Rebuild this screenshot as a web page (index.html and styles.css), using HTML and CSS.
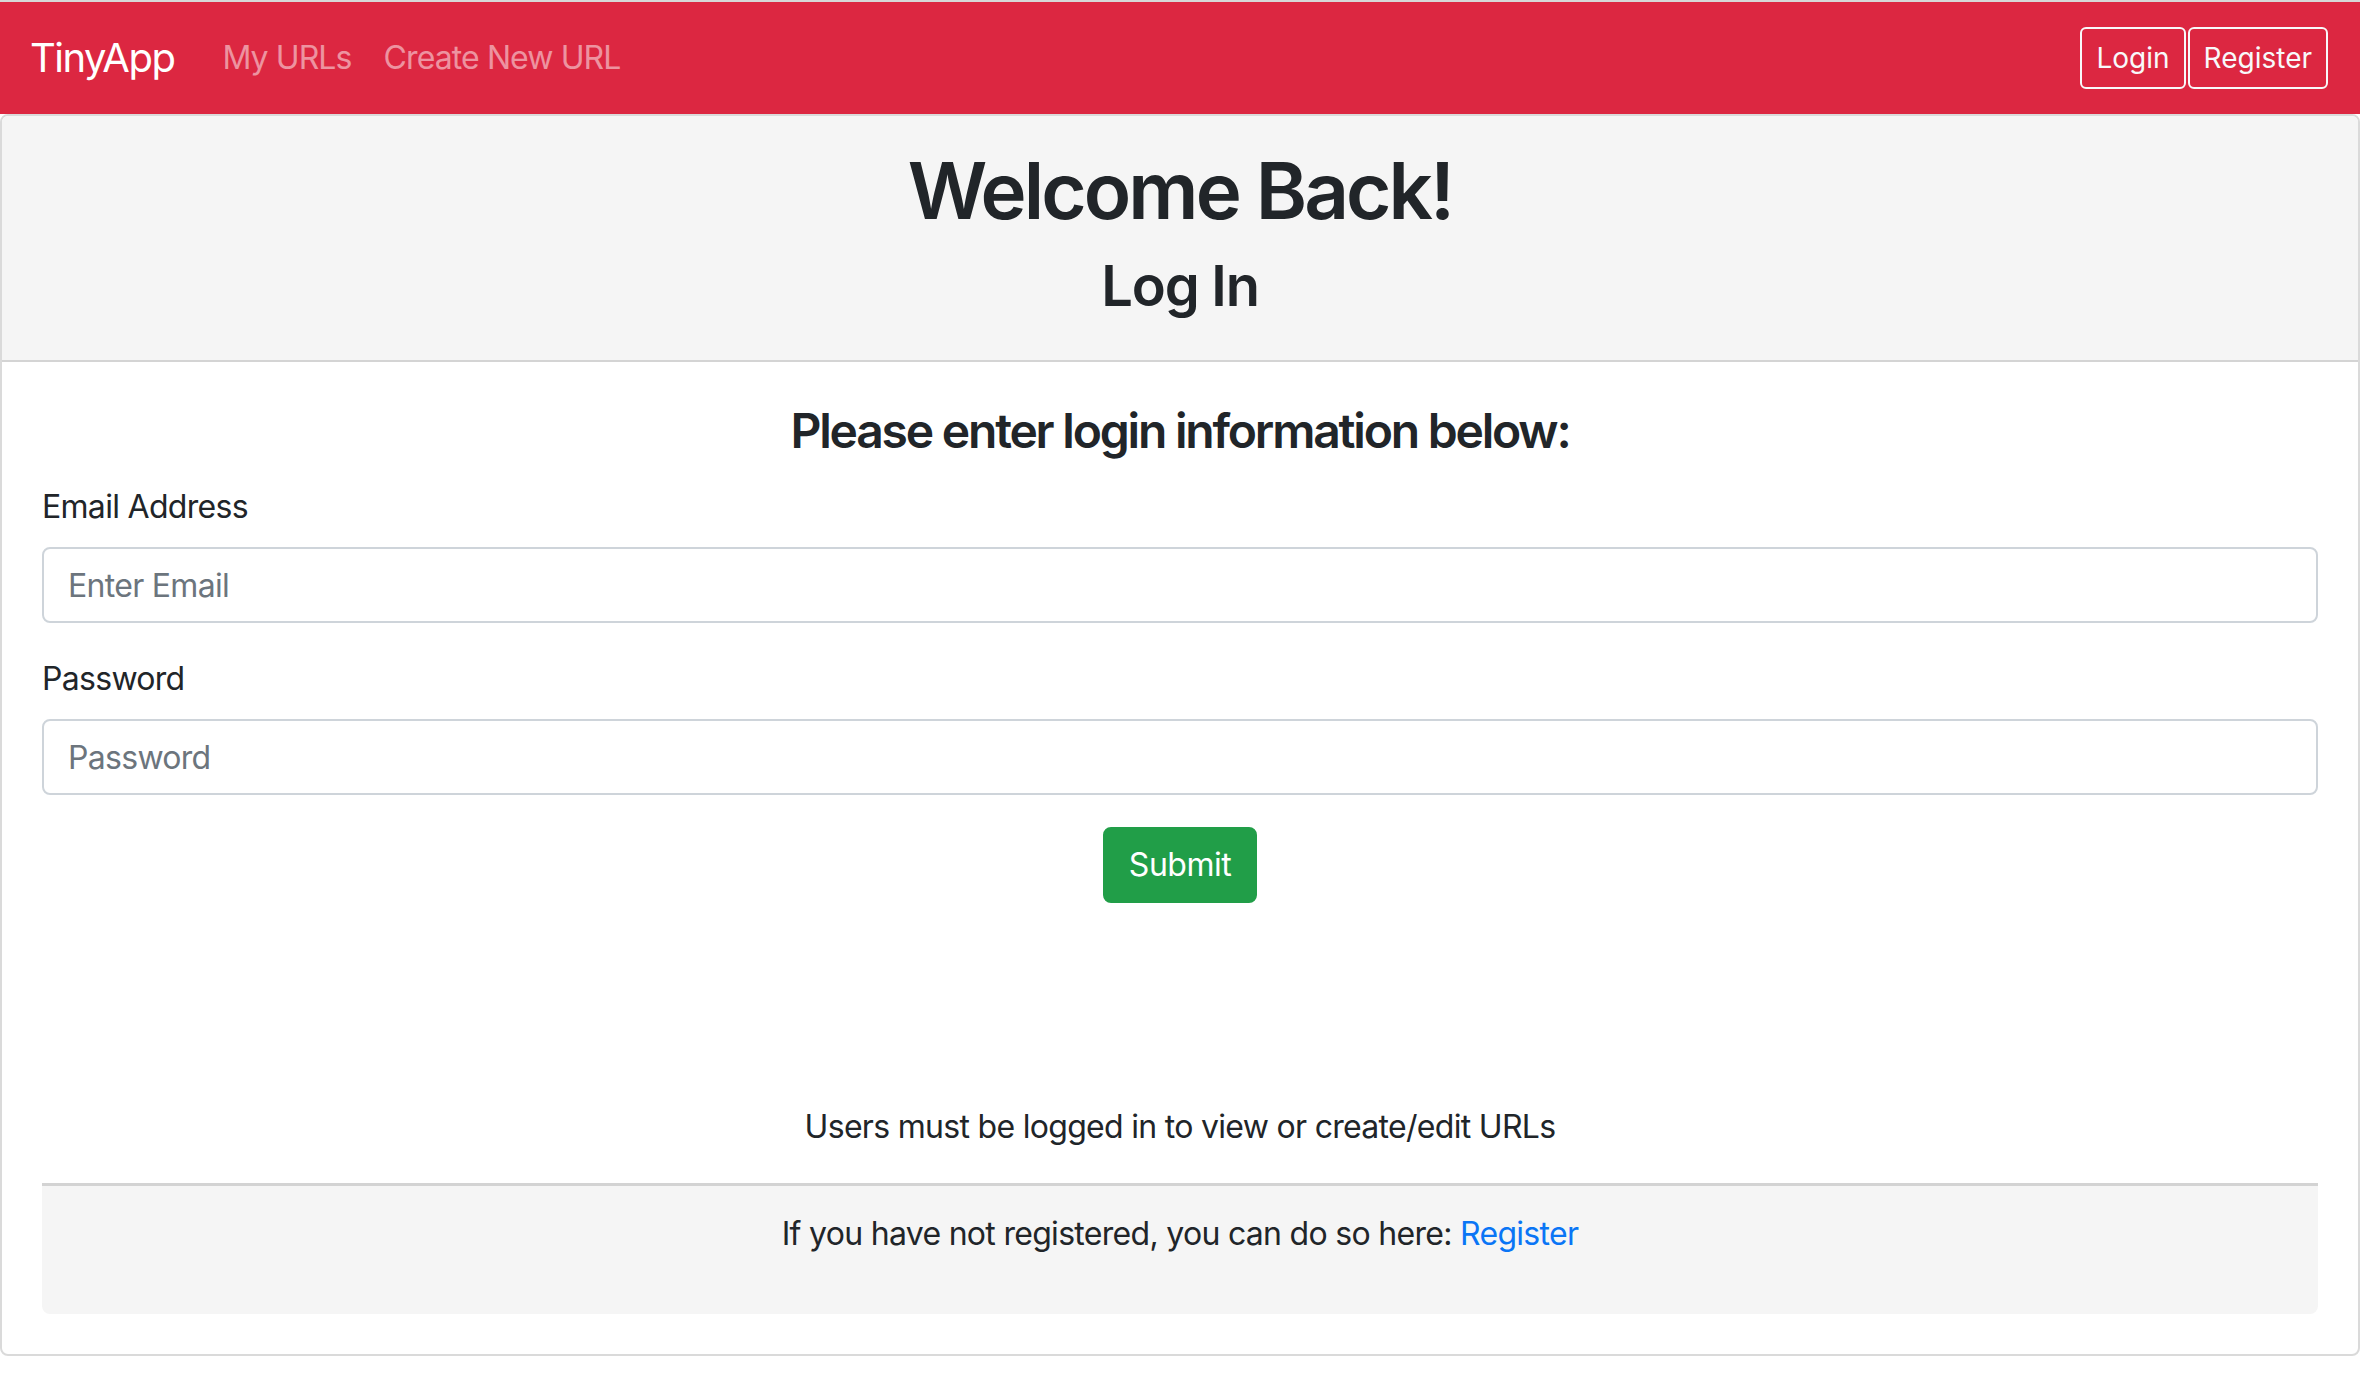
FILE: index.html
```html
<!DOCTYPE html>
<html lang="en">
<head>
<meta charset="utf-8">
<title>TinyApp - Login</title>
<link rel="stylesheet" href="styles.css">
</head>
<body>
  <nav class="navbar">
    <a class="brand" href="#">TinyApp</a>
    <div class="nav-links">
      <a class="nav-link" href="#">My URLs</a>
      <a class="nav-link" href="#">Create New URL</a>
    </div>
    <div class="nav-actions">
      <button class="btn-outline" type="button">Login</button>
      <button class="btn-outline" type="button">Register</button>
    </div>
  </nav>

  <main class="card">
    <header class="card-header">
      <h1 class="title">Welcome Back!</h1>
      <h2 class="subtitle">Log In</h2>
    </header>
    <section class="card-body">
      <h3 class="form-title">Please enter login information below:</h3>
      <form class="login-form">
        <div class="form-group">
          <label class="form-label" for="email">Email Address</label>
          <input class="form-control" id="email" type="email" placeholder="Enter Email">
        </div>
        <div class="form-group">
          <label class="form-label" for="password">Password</label>
          <input class="form-control" id="password" type="password" placeholder="Password">
        </div>
        <div class="submit-row">
          <button class="btn-success" type="submit">Submit</button>
        </div>
      </form>
      <p class="notice">Users must be logged in to view or create/edit URLs</p>
      <div class="sub-footer">
        <p class="sub-footer-text">If you have not registered, you can do so here: <a class="link" href="#">Register</a></p>
      </div>
    </section>
  </main>
</body>
</html>
```

FILE: styles.css
```css
* { box-sizing: border-box; }

html, body {
  margin: 0;
  padding: 0;
  background: #ffffff;
}

body {
  font-family: Inter, "Noto Sans", "Liberation Sans", sans-serif;
  font-size: 32px;
  line-height: 1.5;
  color: #212529;
  border-top: 2px solid #d7d7d7;
}

/* Navbar */
.navbar {
  display: flex;
  align-items: center;
  background: #dc2741;
  padding: 16px 32px 16px 30px;
  height: 112px;
}

.brand {
  color: #ffffff;
  text-decoration: none;
  font-size: 40px;
  line-height: 60px;
  padding: 10px 0;
  margin-right: 32px;
  letter-spacing: -1.5px;
}

.nav-links {
  display: flex;
  flex: 1;
}

.nav-link {
  color: rgba(255, 255, 255, 0.5);
  text-decoration: none;
  font-size: 32px;
  line-height: 48px;
  padding: 16px;
  letter-spacing: -0.9px;
}

.nav-actions {
  display: flex;
  gap: 2px;
}

.btn-outline {
  font-family: inherit;
  font-size: 28px;
  line-height: 42px;
  padding: 8px 14px;
  color: #f8f9fa;
  background: transparent;
  border: 2px solid #f8f9fa;
  border-radius: 6px;
}

/* Card */
.card {
  border: 2px solid #dadada;
  border-radius: 8px;
  margin: 0;
}

.card-header {
  background: #f5f5f5;
  border-bottom: 2px solid #d4d4d4;
  border-radius: 6px 6px 0 0;
  padding: 28px 40px 24px;
  text-align: center;
}

.title {
  font-size: 78px;
  font-weight: 600;
  line-height: 1.2;
  margin: 0 0 15px;
  letter-spacing: -2.9px;
}

.subtitle {
  font-size: 56px;
  font-weight: 600;
  line-height: 1.2;
  margin: 0 0 16px;
  letter-spacing: -1.2px;
}

.card-body {
  padding: 40px;
}

.form-title {
  font-size: 48px;
  font-weight: 600;
  line-height: 1.2;
  margin: 0 0 24px;
  text-align: center;
  letter-spacing: -2.2px;
}

.form-group {
  margin-bottom: 32px;
}

.form-label {
  display: inline-block;
  margin-bottom: 16px;
  letter-spacing: -0.7px;
}

.form-control {
  display: block;
  width: 100%;
  height: 76px;
  padding: 12px 24px;
  font-family: inherit;
  font-size: 32px;
  line-height: 48px;
  color: #495057;
  background: #ffffff;
  border: 2px solid #ced4da;
  border-radius: 8px;
  letter-spacing: -0.7px;
}

.form-control::placeholder {
  color: #6c757d;
  opacity: 1;
}

.submit-row {
  display: flex;
  justify-content: center;
}

.btn-success {
  font-family: inherit;
  font-size: 32px;
  line-height: 48px;
  padding: 12px 24px;
  color: #ffffff;
  background: #219e48;
  border: 2px solid #219e48;
  border-radius: 8px;
  letter-spacing: -0.5px;
}

.notice {
  text-align: center;
  margin: 200px 0 32px;
  letter-spacing: -0.7px;
}

.sub-footer {
  background: #f5f5f5;
  border-top: 3px solid #d3d3d3;
  border-radius: 0 0 8px 8px;
  padding: 24px 40px;
  text-align: center;
}

.sub-footer-text {
  margin: 0 0 32px;
  letter-spacing: -0.7px;
}

.link {
  color: #0a75f5;
  text-decoration: none;
}
```
